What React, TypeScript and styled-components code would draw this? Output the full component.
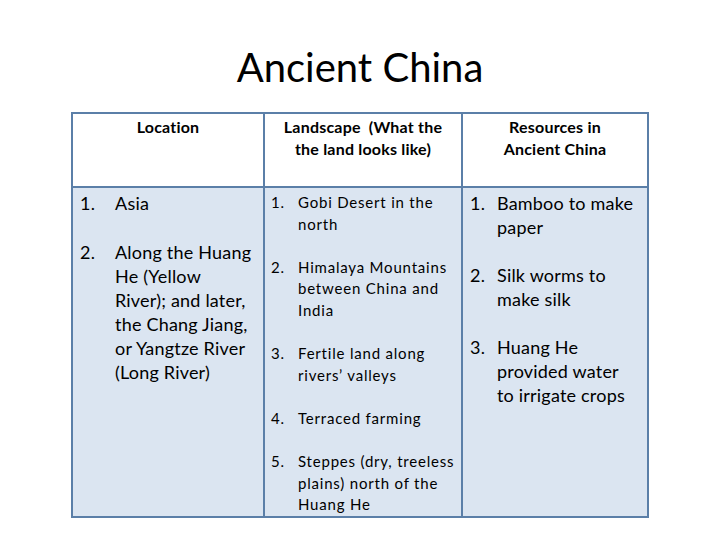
import styled, { createGlobalStyle } from 'styled-components'

const Global = createGlobalStyle`
  body {
    margin: 0;
    background: #ffffff;
    font-family: Lato, "Liberation Sans", sans-serif;
    color: #000000;
  }
`

const Slide = styled.div`
  width: 720px;
  height: 540px;
  display: flex;
  flex-direction: column;
  align-items: center;
  padding-top: 43px;
  box-sizing: border-box;
`
const Title = styled.h1`
  margin: 0 0 21px;
  font-size: 40px;
  line-height: 48px;
  font-weight: 400;
`
const Table = styled.div`
  display: grid;
  grid-template-columns: 190px 196px 184px;
  grid-template-rows: 72px 328px;
  gap: 2px;
  padding: 2px;
  background: #5b7fa8;
`
const Head = styled.div`
  background: #ffffff;
  padding-top: 2px;
  font-size: 16px;
  letter-spacing: 0.2px;
  line-height: 22px;
  font-weight: 700;
  text-align: center;
`
const Cell = styled.div<{ $small?: boolean }>`
  background: #dbe5f1;
  padding: ${p => (p.$small ? '4px' : '3px')} 0 0 ${p => (p.$small ? '6px' : '7px')};
  font-size: ${p => (p.$small ? '15px' : '18px')};
  letter-spacing: ${p => (p.$small ? '0.8px' : '0.2px')};
  line-height: ${p => (p.$small ? '21.6px' : '24px')};
`
const List = styled.ol`
  list-style: none;
  margin: 0;
  padding: 0;
  display: flex;
  flex-direction: column;
`
const Item = styled.li<{ $gap: string }>`
  display: flex;
  margin-bottom: ${p => p.$gap};
`
const Num = styled.span<{ $w: number }>`
  flex: 0 0 ${p => p.$w}px;
`
const Text = styled.span`
  white-space: nowrap;
`

const location = [
  ['Asia'],
  ['Along the Huang', 'He (Yellow', 'River); and later,', 'the Chang Jiang,', 'or Yangtze River', '(Long River)'],
]
const landscape = [
  ['Gobi Desert in the', 'north'],
  ['Himalaya Mountains', 'between China and', 'India'],
  ['Fertile land along', 'rivers\u2019 valleys'],
  ['Terraced farming'],
  ['Steppes (dry, treeless', 'plains) north of the', 'Huang He'],
]
const resources = [
  ['Bamboo to make', 'paper'],
  ['Silk worms to', 'make silk'],
  ['Huang He', 'provided water', 'to irrigate crops'],
]

const Lines = ({ lines }: { lines: string[] }) => (
  <Text>
    {lines.map((l, i) => (
      <span key={i}>
        {i > 0 && <br />}
        {l}
      </span>
    ))}
  </Text>
)

const Numbered = ({ items, numW, gap }: { items: string[][]; numW: number; gap: string }) => (
  <List>
    {items.map((lines, i) => (
      <Item key={i} $gap={gap}>
        <Num $w={numW}>{i + 1}.</Num>
        <Lines lines={lines} />
      </Item>
    ))}
  </List>
)

const App = () => {
  return (
    <Slide>
      <Global />
      <Title>Ancient China</Title>
      <Table>
        <Head>Location</Head>
        <Head>
          Landscape &nbsp;(What the
          <br />
          the land looks like)
        </Head>
        <Head>
          Resources in
          <br />
          Ancient China
        </Head>
        <Cell>
          <Numbered items={location} numW={35} gap="25px" />
        </Cell>
        <Cell $small>
          <Numbered items={landscape} numW={27} gap="21.6px" />
        </Cell>
        <Cell>
          <Numbered items={resources} numW={27} gap="24px" />
        </Cell>
      </Table>
    </Slide>
  )
}

export default App
